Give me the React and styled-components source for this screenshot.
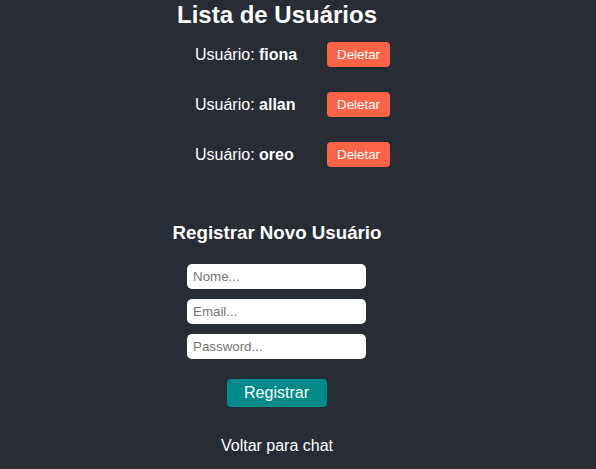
import styled, { createGlobalStyle } from 'styled-components';

const GlobalStyle = createGlobalStyle`
  body {
    margin: 0;
    background-color: #282c34;
    font-family: 'Liberation Sans', Arial, sans-serif;
    color: #fff;
  }
`;

const Page = styled.div`
  width: 554px;
  min-height: 469px;
  display: flex;
  flex-direction: column;
  align-items: center;
`;

const Title = styled.h1`
  font-size: 24px;
  font-weight: bold;
  margin: 0;
  padding-top: 1px;
  line-height: 27px;
`;

const UserList = styled.ul`
  list-style: none;
  margin: 14px 0 0;
  padding: 0 0 0 31px;
  display: flex;
  flex-direction: column;
  gap: 25px;
`;

const UserRow = styled.li`
  width: 195px;
  height: 25px;
  display: flex;
  align-items: center;
  justify-content: space-between;
  font-size: 16px;

  b {
    font-weight: bold;
  }
`;

const DeleteButton = styled.button`
  font-family: inherit;
  font-size: 13.33px;
  color: #fff;
  background-color: #ff6347;
  border: none;
  border-radius: 4px;
  width: 63px;
  height: 25px;
  padding: 0;
  cursor: pointer;
`;

const SubTitle = styled.h2`
  font-size: 18.72px;
  font-weight: bold;
  margin: 55px 0 0;
  line-height: 22px;
`;

const Form = styled.form`
  display: flex;
  flex-direction: column;
  align-items: center;
  margin-top: 20px;
  margin-right: 1px;
  gap: 10px;
`;

const Input = styled.input`
  font-family: inherit;
  font-size: 13.33px;
  width: 179px;
  height: 25px;
  box-sizing: border-box;
  padding: 0 6px;
  border: none;
  border-radius: 5px;
  background: #fff;
  color: #222;
  outline: none;

  &::placeholder {
    color: #757575;
  }
`;

const SubmitButton = styled.button`
  font-family: inherit;
  font-size: 16px;
  color: #fff;
  background-color: #008b8b;
  border: none;
  border-radius: 4px;
  width: 100px;
  height: 28px;
  padding: 0;
  margin-top: 10px;
  cursor: pointer;
`;

const BackLink = styled.a`
  font-size: 16px;
  color: #fff;
  text-decoration: none;
  margin-top: 30px;
  line-height: 18px;
  cursor: pointer;
`;

const users = ['fiona', 'allan', 'oreo'];

const App = () => {
  const submitHandler = (event) => {
    event.preventDefault();
  };

  return (
    <>
      <GlobalStyle />
      <Page>
        <Title>Lista de Usuários</Title>
        <UserList>
          {users.map((name) => (
            <UserRow key={name}>
              <span>
                Usuário: <b>{name}</b>
              </span>
              <DeleteButton type='button'>Deletar</DeleteButton>
            </UserRow>
          ))}
        </UserList>
        <SubTitle>Registrar Novo Usuário</SubTitle>
        <Form onSubmit={submitHandler}>
          <Input type='text' placeholder='Nome...' />
          <Input type='email' placeholder='Email...' />
          <Input type='password' placeholder='Password...' />
          <SubmitButton>Registrar</SubmitButton>
        </Form>
        <BackLink>Voltar para chat</BackLink>
      </Page>
    </>
  );
};

export default App;
